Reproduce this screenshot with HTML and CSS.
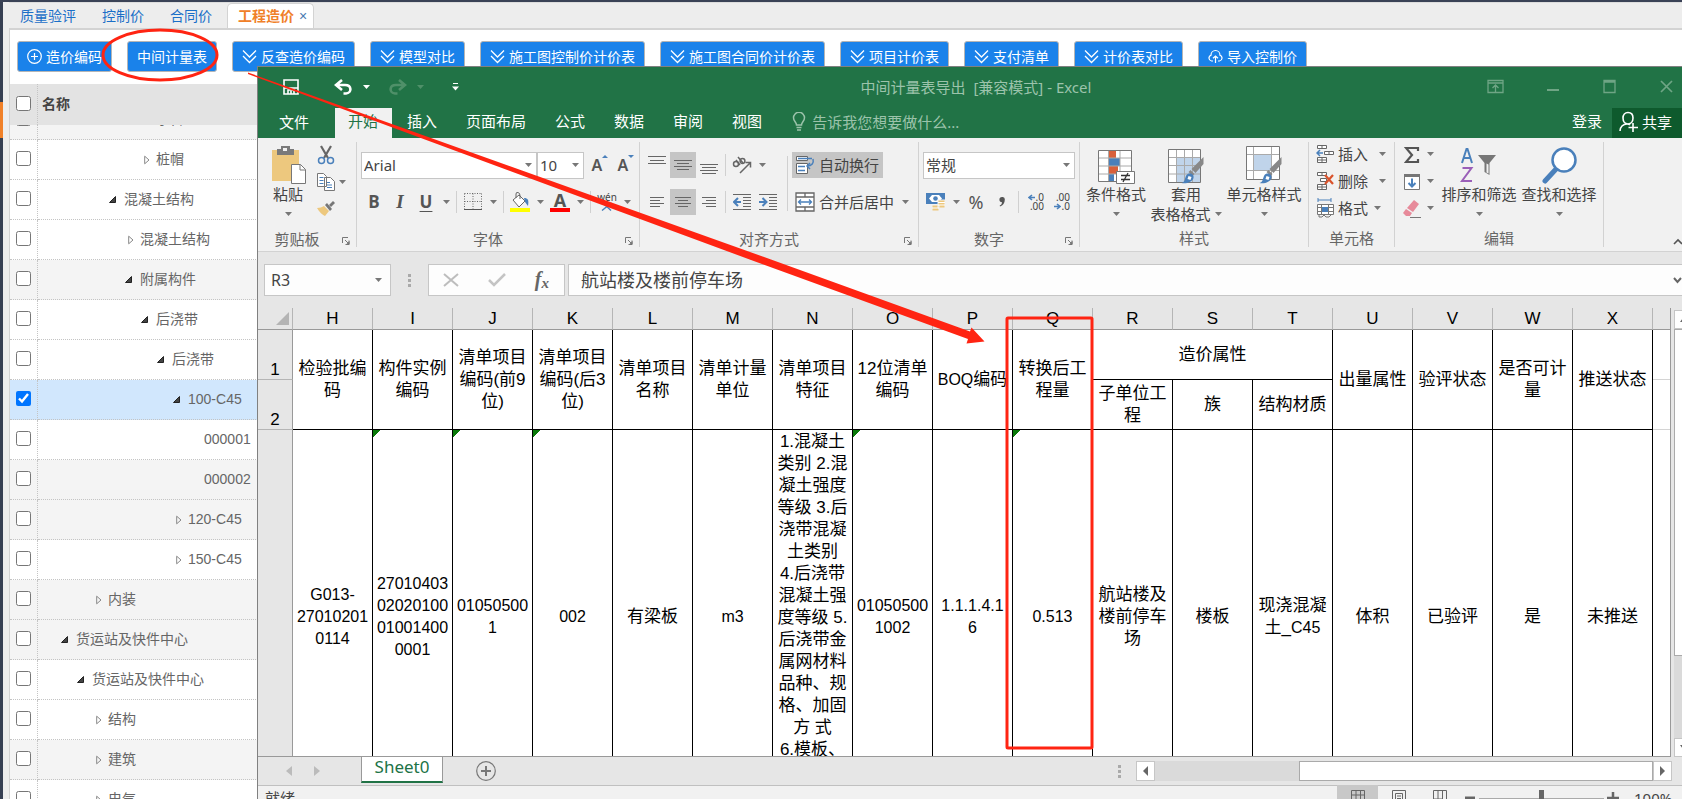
FILE: index.html
```html
<!DOCTYPE html>
<html lang="zh-CN">
<head>
<meta charset="utf-8">
<title>工程造价</title>
<link rel="stylesheet" href="styles.css">
</head>
<body>
<svg class="defs" aria-hidden="true">
  <symbol id="caret" viewBox="0 0 7 4"><path d="M0 0h7L3.500 4z" fill="currentColor"/></symbol>
  <symbol id="chev" viewBox="0 0 15 15"><path d="M1 1.500l6.500 6.500L14 1.500M1 7l6.500 6.500L14 7" fill="none" stroke="currentColor" stroke-width="1.300"/></symbol>
  <symbol id="launch" viewBox="0 0 8 8"><path d="M.5 6V.5H6M3 3l4 4M7 3.500V7.500H3.500" fill="none" stroke="#777"/><path d="M7.500 4v3.500H4z" fill="#777"/></symbol>
  <symbol id="open" viewBox="0 0 6 10"><path d="M.7 1.200L5 5 .7 8.800z" fill="none" stroke="#888"/></symbol>
  <symbol id="down" viewBox="0 0 7 7"><path d="M6.500.5v6h-6z" fill="#444" stroke="#222"/></symbol>
  <symbol id="brush" viewBox="0 0 24 28"><path d="M23 1v7l-8 9-4-4z" fill="#888"/><path d="M10 14l4 4-2 2-4-4z" fill="#888"/><path d="M1 27c4-1 3-5 5-8 3-3 8-1 7 3-1 4-7 6-12 5z" fill="#4a80bb"/><path d="M8 20l3 1-1 3-3-1z" fill="#fff"/></symbol>
</svg>

<div class="app">
  <nav class="rail"><a class="rail-item" href="#" aria-label="当前模块"></a></nav>
  <main class="main">
    <nav class="tabs">
      <a class="tab" href="#">质量验评</a><a class="tab" href="#">控制价</a><a class="tab" href="#">合同价</a>
      <a class="tab tab-on" href="#">工程造价 <span class="tab-x">×</span></a>
    </nav>
    <section class="panel">
      <div class="toolbar">
        <button class="btn"><svg viewBox="0 0 15 15"><circle cx="7.500" cy="7.500" r="6.800" fill="none" stroke="currentColor" stroke-width="1.200"/><path d="M7.500 4v7M4 7.500h7" stroke="currentColor" stroke-width="1.200"/></svg>造价编码</button>
        <button class="btn">中间计量表</button>
        <button class="btn"><svg><use href="#chev"/></svg>反查造价编码</button>
        <button class="btn"><svg><use href="#chev"/></svg>模型对比</button>
        <button class="btn"><svg><use href="#chev"/></svg>施工图控制价计价表</button>
        <button class="btn"><svg><use href="#chev"/></svg>施工图合同价计价表</button>
        <button class="btn"><svg><use href="#chev"/></svg>项目计价表</button>
        <button class="btn"><svg><use href="#chev"/></svg>支付清单</button>
        <button class="btn"><svg><use href="#chev"/></svg>计价表对比</button>
        <button class="btn"><svg viewBox="0 0 15 15"><path d="M5 12H3.500a3 3 0 0 1-.5-5.800C3 3.500 5 1.500 7.500 1.500S12 3.500 12 6.200a3 3 0 0 1-.5 5.800H10M7.500 14V7M5 9.300L7.500 7 10 9.300" fill="none" stroke="currentColor" stroke-width="1.200"/></svg>导入控制价</button>
      </div>
      <div class="tree-head"><span class="tree-check"><input type="checkbox" aria-label="全选"></span><span class="tree-title">名称</span></div>
      <div class="tree-body">
        <table class="tree">
          <tr class="alt"><td class="tree-check"><input type="checkbox" aria-label="承台"></td><td class="l7"><svg class="open"><use href="#open"/></svg>承台</td></tr>
          <tr><td class="tree-check"><input type="checkbox" aria-label="桩帽"></td><td class="l7"><svg class="open"><use href="#open"/></svg>桩帽</td></tr>
          <tr><td class="tree-check"><input type="checkbox" aria-label="混凝土结构"></td><td class="l5"><svg class="down"><use href="#down"/></svg>混凝土结构</td></tr>
          <tr><td class="tree-check"><input type="checkbox" aria-label="混凝土结构"></td><td class="l6"><svg class="open"><use href="#open"/></svg>混凝土结构</td></tr>
          <tr class="alt"><td class="tree-check"><input type="checkbox" aria-label="附属构件"></td><td class="l6"><svg class="down"><use href="#down"/></svg>附属构件</td></tr>
          <tr><td class="tree-check"><input type="checkbox" aria-label="后浇带"></td><td class="l7"><svg class="down"><use href="#down"/></svg>后浇带</td></tr>
          <tr><td class="tree-check"><input type="checkbox" aria-label="后浇带"></td><td class="l8"><svg class="down"><use href="#down"/></svg>后浇带</td></tr>
          <tr class="sel"><td class="tree-check"><input type="checkbox" checked aria-label="100-C45"></td><td class="l9"><svg class="down"><use href="#down"/></svg>100-C45</td></tr>
          <tr><td class="tree-check"><input type="checkbox" aria-label="000001"></td><td class="l11">000001</td></tr>
          <tr class="alt"><td class="tree-check"><input type="checkbox" aria-label="000002"></td><td class="l11">000002</td></tr>
          <tr class="alt"><td class="tree-check"><input type="checkbox" aria-label="120-C45"></td><td class="l9"><svg class="open"><use href="#open"/></svg>120-C45</td></tr>
          <tr><td class="tree-check"><input type="checkbox" aria-label="150-C45"></td><td class="l9"><svg class="open"><use href="#open"/></svg>150-C45</td></tr>
          <tr class="alt"><td class="tree-check"><input type="checkbox" aria-label="内装"></td><td class="l4"><svg class="open"><use href="#open"/></svg>内装</td></tr>
          <tr class="alt"><td class="tree-check"><input type="checkbox" aria-label="货运站及快件中心"></td><td class="l2"><svg class="down"><use href="#down"/></svg>货运站及快件中心</td></tr>
          <tr><td class="tree-check"><input type="checkbox" aria-label="货运站及快件中心"></td><td class="l3"><svg class="down"><use href="#down"/></svg>货运站及快件中心</td></tr>
          <tr><td class="tree-check"><input type="checkbox" aria-label="结构"></td><td class="l4"><svg class="open"><use href="#open"/></svg>结构</td></tr>
          <tr class="alt"><td class="tree-check"><input type="checkbox" aria-label="建筑"></td><td class="l4"><svg class="open"><use href="#open"/></svg>建筑</td></tr>
          <tr><td class="tree-check"><input type="checkbox" aria-label="电气"></td><td class="l4"><svg class="open"><use href="#open"/></svg>电气</td></tr>
        </table>
      </div>
    </section>
  </main>
</div>

<section class="excel">
  <header class="titlebar">
    <div class="qat">
      <button aria-label="保存"><svg width="18" height="18" viewBox="0 0 18 18"><path d="M2 2h14v14H2zM2 10h14M6 16v-4h6v4M9 13v3" fill="none" stroke="#fff" stroke-width="1.600"/></svg></button>
      <button class="q-undo" aria-label="撤消"><svg width="19" height="16" viewBox="0 0 19 16"><path d="M8 1L2 6l6 5M2 6h9c7 0 7 8 1 8.500H9.500" fill="none" stroke="#fff" stroke-width="2.600"/></svg><svg class="caret"><use href="#caret"/></svg></button>
      <button class="q-redo" aria-label="恢复"><svg width="19" height="16" viewBox="0 0 19 16"><path d="M11 1l6 5-6 5M17 6H8c-7 0-7 8-1 8.500h2.500" fill="none" stroke="currentColor" stroke-width="2.600"/></svg><svg class="caret"><use href="#caret"/></svg></button>
      <button class="q-more" aria-label="自定义快速访问工具栏"><svg width="7" height="8" viewBox="0 0 7 8"><path d="M1 .5h5" stroke="#fff"/><path d="M0 3.500h7L3.500 7.500z" fill="#fff"/></svg></button>
    </div>
    <h1 class="title">中间计量表导出&nbsp; [兼容模式] - Excel</h1>
    <div class="winctl">
      <button aria-label="功能区显示选项"><svg viewBox="0 0 17 17"><path d="M1 2.500h15v12H1zM1 5h15M8.500 14V7.500M5.500 10l3-3 3 3" fill="none" stroke="currentColor" stroke-width="1.300"/></svg></button>
      <button aria-label="最小化"><svg viewBox="0 0 17 17"><path d="M3 12h12" stroke="currentColor" stroke-width="2"/></svg></button>
      <button aria-label="最大化"><svg viewBox="0 0 17 17"><path d="M3 2.500h11v12H3zM3 4h11" fill="none" stroke="currentColor" stroke-width="1.300"/></svg></button>
      <button aria-label="关闭"><svg viewBox="0 0 17 17"><path d="M3 3l11 11M14 3L3 14" stroke="currentColor" stroke-width="1.700"/></svg></button>
    </div>
  </header>
  <nav class="rtabs">
    <button class="rtab file">文件</button><button class="rtab on">开始</button><button class="rtab">插入</button><button class="rtab">页面布局</button><button class="rtab">公式</button><button class="rtab">数据</button><button class="rtab">审阅</button><button class="rtab">视图</button>
    <button class="tell"><svg width="14" height="20" viewBox="0 0 14 20"><path d="M4.500 13c0-3-3-3.500-3-7.200a5.500 5.500 0 0 1 11 0c0 3.700-3 4.200-3 7.200zM4.500 15.500h5M5 18h4" fill="none" stroke="currentColor" stroke-width="1.500"/></svg>告诉我您想要做什么...</button>
    <button class="login">登录</button>
    <button class="share"><svg width="20" height="22" viewBox="0 0 20 22"><path d="M1 20c0-4 3-7 7-7 1 0 2 0 3 1M9 1.500c3 0 5 2.200 5 5.500s-2 6-5 6-5-2.700-5-6 2-5.500 5-5.500zM14 12v9M9.500 16.500h9.500" fill="none" stroke="#fff" stroke-width="1.600"/></svg>共享</button>
  </nav>

  <div class="ribbon">
    <div class="group g-clip">
      <div class="gbody">
        <button class="big b-paste"><svg viewBox="0 0 38 38"><path d="M3 4h27v31H3z" fill="#edc87e"/><path d="M8 3h4V0h9v3h4v6H8z" fill="#7a7a7a"/><path d="M14 2h4v3h-4z" fill="#f1f1f1"/><path d="M22.500 18.500h9l5 5v14h-14z" fill="#fff" stroke="#777"/><path d="M31 18.500V24h5.500" fill="none" stroke="#777"/></svg><span>粘贴</span><svg class="caret"><use href="#caret"/></svg></button>
        <div class="stack">
          <button class="tool" aria-label="剪切"><svg width="18" height="20" viewBox="0 0 18 20"><path d="M4 1l7 12M14 1L7 13" stroke="#666" stroke-width="2.200"/><circle cx="4.500" cy="15.500" r="3" fill="none" stroke="#4a80bb" stroke-width="1.500"/><circle cx="13.500" cy="15.500" r="3" fill="none" stroke="#4a80bb" stroke-width="1.500"/></svg></button>
          <div class="row tight"><button class="tool" aria-label="复制"><svg width="18" height="20" viewBox="0 0 18 20"><path d="M.5 1.500h6l3 3v10h-9zM7.500 5.500h6l4 4v9h-10z" fill="#fff" stroke="#777"/><path d="M2.500 5.500h4M2.500 8.500h4M2.500 11.500h4M10 10.500h3M10 13h5M10 15.500h5" stroke="#4a80bb"/></svg></button><button class="drop" aria-label="复制选项"><svg class="caret"><use href="#caret"/></svg></button></div>
          <button class="tool" aria-label="格式刷"><svg width="18" height="16" viewBox="0 0 18 16"><path d="M7 5l5 5-4 5c-2-1-6-4-8-8 3 0 5-1 7-2z" fill="#edc87e"/><path d="M8 4l2-2 5 6-2 2zM12 4l4-4 2 2-4 4z" fill="#777"/></svg></button>
        </div>
      </div>
      <div class="glabel with-launch"><span>剪贴板</span><svg class="launch"><use href="#launch"/></svg></div>
    </div>

    <div class="group g-font">
      <div class="gbody rows">
        <div class="row">
          <label class="combo c-font"><select aria-label="字体"><option>Arial</option></select><svg class="caret"><use href="#caret"/></svg></label><label class="combo c-size"><select aria-label="字号"><option>10</option></select><svg class="caret"><use href="#caret"/></svg></label>
          <button class="tool glyph grow" aria-label="增大字号">A<svg width="6" height="3" viewBox="0 0 6 3"><path d="M0 3l3-3 3 3z" fill="#4a80bb"/></svg></button>
          <button class="tool glyph grow" aria-label="减小字号">A<svg width="6" height="3" viewBox="0 0 6 3"><path d="M0 0h6L3 3z" fill="#4a80bb"/></svg></button>
        </div>
        <div class="row">
          <button class="tool glyph bold">B</button><button class="tool glyph ital">I</button><button class="tool glyph under">U</button><button class="drop" aria-label="下划线选项"><svg class="caret"><use href="#caret"/></svg></button><i class="sep"></i>
          <button class="tool" aria-label="边框"><svg width="18" height="18" viewBox="0 0 18 18"><path d="M.5 .5h17M.5 8.500h17M.5.500v16M9 .5v16M17.500.500v16" stroke="#666" stroke-dasharray="1 1.500"/><path d="M0 16.500h18" stroke="#555"/></svg></button><button class="drop" aria-label="边框选项"><svg class="caret"><use href="#caret"/></svg></button><i class="sep"></i>
          <button class="tool" aria-label="填充颜色"><svg width="20" height="20" viewBox="0 0 20 20"><path d="M3 8l6-5 6 6-6 6z" fill="#fff" stroke="#666"/><path d="M6 6V2q0-2 2-1.500t2 3V7" fill="none" stroke="#666"/><path d="M14 6c4 0 5 2 4 8l-3-4z" fill="#4a80bb"/><path d="M0 16h20v4H0z" fill="#ff0"/></svg></button><button class="drop" aria-label="填充颜色选项"><svg class="caret"><use href="#caret"/></svg></button>
          <button class="tool glyph fcolor">A</button><button class="drop" aria-label="字体颜色选项"><svg class="caret"><use href="#caret"/></svg></button><i class="sep"></i>
          <button class="tool pinyin" aria-label="拼音">wén<svg width="12" height="10" viewBox="0 0 12 10"><path d="M6 0v2M1 2.500h10M3 3l7 6.500M9 3L1 9.500" fill="none" stroke="#4a80bb" stroke-width="1.400"/></svg></button><button class="drop" aria-label="拼音选项"><svg class="caret"><use href="#caret"/></svg></button>
        </div>
      </div>
      <div class="glabel with-launch"><span>字体</span><svg class="launch"><use href="#launch"/></svg></div>
    </div>

    <div class="group g-align">
      <div class="gbody">
        <div class="rows">
          <div class="row">
            <button class="tool" aria-label="顶端对齐"><svg class="al" viewBox="0 0 18 18"><path d="M0 .5h18M2 4.500h14M0 7.500h18" stroke="#666"/></svg></button><button class="tool pressed" aria-label="垂直居中"><svg class="al" viewBox="0 0 18 18"><path d="M0 4.500h18M3 7.500h12M0 10.500h18M3 13.500h12" stroke="#666"/></svg></button><button class="tool" aria-label="底端对齐"><svg class="al" viewBox="0 0 18 18"><path d="M0 8.500h18M2 11.500h14M0 14.500h18M2 17.500h14" stroke="#666"/></svg></button><i class="sep"></i>
            <button class="tool" aria-label="方向"><svg width="20" height="18" viewBox="0 0 20 18"><g fill="none" stroke="#666" stroke-width="1.500"><ellipse cx="4" cy="8" rx="2.500" ry="2.500"/><path d="M4 4l4 5M6 1l5 6"/><circle cx="10.500" cy="5" r="2.400"/><path d="M8 17L18 7M13.500 6.500h5V11.500"/></g></svg></button><button class="drop" aria-label="方向选项"><svg class="caret"><use href="#caret"/></svg></button>
          </div>
          <div class="row">
            <button class="tool" aria-label="左对齐"><svg class="al" viewBox="0 0 18 18"><path d="M2 4.500h14M2 7.500h10M2 10.500h14M2 13.500h10" stroke="#666"/></svg></button><button class="tool pressed" aria-label="居中"><svg class="al" viewBox="0 0 18 18"><path d="M1 4.500h16M4 7.500h10M1 10.500h16M4 13.500h10" stroke="#666"/></svg></button><button class="tool" aria-label="右对齐"><svg class="al" viewBox="0 0 18 18"><path d="M2 4.500h14M6 7.500h10M2 10.500h14M6 13.500h10" stroke="#666"/></svg></button><i class="sep"></i>
            <button class="tool" aria-label="减少缩进量"><svg class="al" viewBox="0 0 18 18"><path d="M0 1.500h18M10 4.500h8M10 7.500h8M10 10.500h8M10 13.500h8M0 16.500h18" stroke="#666"/><path d="M8 9H2M5 5L1 9l4 4" fill="none" stroke="#4a80bb" stroke-width="2"/></svg></button><button class="tool" aria-label="增加缩进量"><svg class="al" viewBox="0 0 18 18"><path d="M0 1.500h18M10 4.500h8M10 7.500h8M10 10.500h8M10 13.500h8M0 16.500h18" stroke="#666"/><path d="M0 9h6M3.500 5l4 4-4 4" fill="none" stroke="#4a80bb" stroke-width="2"/></svg></button>
          </div>
        </div>
        <i class="sep tall"></i>
        <div class="rows">
          <button class="wide pressed"><svg width="20" height="20" viewBox="0 0 20 20"><path d="M1.500 1.500h11v4h-11zM1.500 8.500h11v10h-11z" fill="#fff" stroke="#666"/><path d="M3 3.500h14M3 11.500h7M3 15.500h7M18 4c1 4-1 7-6 7M15 8l-3 3 3 3" fill="none" stroke="#4a80bb" stroke-width="1.500"/></svg>自动换行</button>
          <div class="row tight"><button class="wide"><svg width="20" height="20" viewBox="0 0 20 20"><path d="M1 1h18v18H1zM1 5h18M1 15h18M10 1v4M10 15v4" fill="#fff" stroke="#666" stroke-width="1.300"/><path d="M4 10h12M6 7.500L3.500 10 6 12.500M14 7.500l2.500 2.500-2.500 2.500" fill="none" stroke="#4a80bb" stroke-width="1.300"/></svg>合并后居中</button><button class="drop" aria-label="合并选项"><svg class="caret"><use href="#caret"/></svg></button></div>
        </div>
      </div>
      <div class="glabel with-launch"><span>对齐方式</span><svg class="launch"><use href="#launch"/></svg></div>
    </div>

    <div class="group g-num">
      <div class="gbody rows">
        <div class="row"><label class="combo c-num"><select aria-label="数字格式"><option>常规</option></select><svg class="caret"><use href="#caret"/></svg></label></div>
        <div class="row">
          <button class="tool" aria-label="会计数字格式"><svg width="20" height="20" viewBox="0 0 20 20"><path d="M0 1h19v11H0z" fill="#4a80bb"/><path d="M3 6.500L6 3h7l3 3.500L13 10H6z" fill="#fff"/><circle cx="9.500" cy="6.500" r="2.300" fill="#4a80bb"/><path d="M12 8h7v8h-7zM6 13h7v6H6z" fill="#edc87e" stroke="#f1f1f1"/><path d="M12 10.500h7M12 13h7M6 16h7" stroke="#fff"/></svg></button><button class="drop" aria-label="会计格式选项"><svg class="caret"><use href="#caret"/></svg></button>
          <button class="tool glyph pct">%</button><button class="tool" aria-label="千位分隔样式"><svg width="6" height="10" viewBox="0 0 6 10"><path d="M3 0a2.600 2.600 0 0 1 2.800 2.800C5.800 6 4 8.500 1 9.500L.7 8.500C2.300 7.700 3 6.700 3 5.200A2.600 2.600 0 0 1 3 0z" fill="#555"/></svg></button><i class="sep"></i>
          <button class="tool dec" aria-label="增加小数位数"><span><svg width="7" height="7" viewBox="0 0 7 7"><path d="M7 3.500H2M4 1L1 3.500 4 6" fill="none" stroke="#4a80bb" stroke-width="1.600"/></svg>.0</span><span>.00</span></button><button class="tool dec" aria-label="减少小数位数"><span>.00</span><span><svg width="7" height="7" viewBox="0 0 7 7"><path d="M0 3.500h5M3 1l3 2.500L3 6" fill="none" stroke="#4a80bb" stroke-width="1.600"/></svg>.0</span></button>
        </div>
      </div>
      <div class="glabel with-launch"><span>数字</span><svg class="launch"><use href="#launch"/></svg></div>
    </div>

    <div class="group g-style">
      <div class="gbody">
        <button class="big b-cond"><svg viewBox="0 0 38 38"><path d="M1.500 4.500h33v31h-33z" fill="#fff"/><path d="M12 5h7v7h-7zM12 20h9v8h-9z" fill="#d9603b"/><path d="M12 12h11v8H12zM12 28h5v7h-5z" fill="#4a80bb"/><path d="M1.500 12h33M1.500 20h33M1.500 28h33M11.500 4v31M23 4v31" stroke="#aaa"/><path d="M1.500 4.500h33v31h-33z" fill="none" stroke="#777"/><path d="M19.500 25.500h18v12h-18z" fill="#fff" stroke="#777"/><path d="M24 29.500h9M24 33.500h9M31 27l-5 9" stroke="#333" stroke-width="1.300"/></svg><span>条件格式</span><svg class="caret"><use href="#caret"/></svg></button>
        <button class="big b-tbl"><svg viewBox="0 0 38 38"><path d="M1.500 3.500h32v33h-32z" fill="#fff"/><path d="M9 12h24v24H9z" fill="#c0d4ea"/><path d="M1.500 11.500h32M1.500 19.500h32M1.500 28h32M9.500 3v33M17.500 3v33M25.500 3v33" stroke="#aaa"/><path d="M1.500 3.500h32v33h-32z" fill="none" stroke="#777"/><use href="#brush" x="13" y="10" width="25" height="28"/></svg><span>套用</span><span>表格格式<svg class="caret"><use href="#caret"/></svg></span></button>
        <button class="big b-cell"><svg viewBox="0 0 38 38"><path d="M1.500.500h33v33h-33z" fill="#fff"/><path d="M9 9h17v15H9z" fill="#c0d4ea"/><path d="M1.500 8.500h33M1.500 24.500h33M8.500 0v33M26.500 0v33" stroke="#aaa"/><path d="M1.500.500h33v33h-33z" fill="none" stroke="#777"/><use href="#brush" x="13" y="10" width="25" height="28"/></svg><span>单元格样式</span><svg class="caret"><use href="#caret"/></svg></button>
      </div>
      <div class="glabel"><span>样式</span></div>
    </div>

    <div class="group g-cells">
      <div class="gbody"><div class="stack">
        <button class="wide"><svg width="18" height="20" viewBox="0 0 18 20"><path d="M1.500 1.500h9v3h-9zM6 1.500v3M1.500 13.500h9v5h-9zM6 13.500v5M1.500 16h9M8.500 7.500h9v3h-9zM13 7.500v3" fill="#fff" stroke="#666"/><path d="M7 9H1M4 6L1 9l3 3" fill="none" stroke="#4a80bb" stroke-width="1.500"/></svg>插入<svg class="caret far"><use href="#caret"/></svg></button>
        <button class="wide"><svg width="18" height="20" viewBox="0 0 18 20"><path d="M1.500 1.500h9v3h-9zM6 1.500v3M1.500 13.500h9v5h-9zM6 13.500v5M1.500 16h9M4.500 7.500h6v3h-6z" fill="#fff" stroke="#666"/><path d="M9 4l8 9M17 4l-8 9" stroke="#d9532c" stroke-width="2.200"/></svg>删除<svg class="caret far"><use href="#caret"/></svg></button>
        <button class="wide"><svg width="18" height="20" viewBox="0 0 18 20"><path d="M2 2h13M2 0v4M15 0v4" stroke="#4a80bb"/><path d="M1.500 6.500h16v10h-16zM1.500 9.500h16M1.500 13.500h16M5.500 6v11M12.500 6v11" fill="#fff" stroke="#777"/><path d="M6 9h6v5H6z" fill="#4a80bb"/><path d="M3 17v2h3l2-2 2 2h3l2-2" fill="none" stroke="#777"/></svg>格式<svg class="caret"><use href="#caret"/></svg></button>
      </div></div>
      <div class="glabel"><span>单元格</span></div>
    </div>

    <div class="group g-edit">
      <div class="gbody">
        <div class="stack">
          <div class="row tight"><button class="tool" aria-label="自动求和"><svg width="16" height="18" viewBox="0 0 16 18"><path d="M14 5V2H2l6 7-6 7h12v-3" fill="none" stroke="#555" stroke-width="2.200"/></svg></button><button class="drop" aria-label="求和选项"><svg class="caret"><use href="#caret"/></svg></button></div>
          <div class="row tight"><button class="tool" aria-label="填充"><svg width="18" height="18" viewBox="0 0 18 18"><path d="M1.500 1.500h15v15h-15z" fill="#fff" stroke="#777"/><path d="M1 1h16v3H1z" fill="#777"/><path d="M9 5.500v8M5.500 10L9 13.500l3.500-3.500" fill="none" stroke="#4a80bb" stroke-width="2"/></svg></button><button class="drop" aria-label="填充选项"><svg class="caret"><use href="#caret"/></svg></button></div>
          <div class="row tight"><button class="tool" aria-label="清除"><svg width="18" height="18" viewBox="0 0 18 18"><path d="M11 0l5 4-6 8-6-4z" fill="#e78a9a"/><path d="M3 9l6 4-2 3H3l-3-3z" fill="#e78a9a"/><path d="M7 17.500h11" stroke="#777"/></svg></button><button class="drop" aria-label="清除选项"><svg class="caret"><use href="#caret"/></svg></button></div>
        </div>
        <button class="big b-cell"><svg viewBox="0 0 38 38"><path d="M2 17L6.500 3h1L12 17M3.500 12h7" fill="none" stroke="#4a80bb" stroke-width="2"/><path d="M2.500 22h9L2 35h10" fill="none" stroke="#9a5fb8" stroke-width="2"/><path d="M18 9h18l-6.500 8v12l-5-3V17z" fill="#777"/><path d="M26.500 17.500v9l2 1v-9z" fill="#f1f1f1"/></svg><span>排序和筛选</span><svg class="caret"><use href="#caret"/></svg></button>
        <button class="big b-cell"><svg viewBox="0 0 38 38"><path d="M17 22L5 35" stroke="#4a80bb" stroke-width="5" stroke-linecap="round"/><circle cx="24" cy="14" r="11.500" fill="#fff" stroke="#4a80bb" stroke-width="2.500"/></svg><span>查找和选择</span><svg class="caret"><use href="#caret"/></svg></button>
      </div>
      <div class="glabel"><span>编辑</span></div>
    </div>
    <button class="collapse" aria-label="折叠功能区"><svg width="10" height="7" viewBox="0 0 10 7"><path d="M1 6l4-4 4 4" fill="none" stroke="#555" stroke-width="1.600"/></svg></button>
  </div>

  <div class="fbar">
    <label class="namebox"><input type="text" value="R3" aria-label="名称框"><svg class="caret"><use href="#caret"/></svg></label>
    <svg class="dots" viewBox="0 0 3 13"><path d="M0 0h3v3H0zM0 5h3v3H0zM0 10h3v3H0z" fill="#aaa"/></svg>
    <div class="fxbox">
      <button aria-label="取消"><svg width="16" height="14" viewBox="0 0 16 14"><path d="M1 1l14 12M15 1L1 13" stroke="#bdbdbd" stroke-width="2"/></svg></button>
      <button aria-label="输入"><svg width="18" height="14" viewBox="0 0 18 14"><path d="M1 7l5 5L17 1" fill="none" stroke="#c4c4c4" stroke-width="2.500"/></svg></button>
      <button class="fx" aria-label="插入函数">f<sub>x</sub></button>
    </div>
    <label class="formula"><input type="text" value="航站楼及楼前停车场" aria-label="编辑栏"><svg width="9" height="7" viewBox="0 0 9 7"><path d="M1 1l3.500 4L8 1" fill="none" stroke="#666" stroke-width="2"/></svg></label>
  </div>

  <div class="sheet-area">
    <div class="sheet-clip">
      <table class="sheet">
        <colgroup><col class="rh"><col span="17" class="dc"><col></colgroup>
        <thead>
          <tr><th class="corner"><svg width="13" height="13" viewBox="0 0 13 13"><path d="M13 0v13H0z" fill="#b4b4b4"/></svg></th><th>H</th><th>I</th><th>J</th><th>K</th><th>L</th><th>M</th><th>N</th><th>O</th><th>P</th><th>Q</th><th>R</th><th>S</th><th>T</th><th>U</th><th>V</th><th>W</th><th>X</th><th class="rest"></th></tr>
        </thead>
        <tbody>
          <tr class="r-head"><th>1</th><td rowspan="2">检验批编<br>码</td><td rowspan="2">构件实例<br>编码</td><td rowspan="2">清单项目<br>编码(前9<br>位)</td><td rowspan="2">清单项目<br>编码(后3<br>位)</td><td rowspan="2">清单项目<br>名称</td><td rowspan="2">清单计量<br>单位</td><td rowspan="2">清单项目<br>特征</td><td rowspan="2">12位清单<br>编码</td><td rowspan="2"><span class="latin">BOQ</span>编码</td><td rowspan="2">转换后工<br>程量</td><td colspan="3">造价属性</td><td rowspan="2">出量属性</td><td rowspan="2">验评状态</td><td rowspan="2">是否可计<br>量</td><td rowspan="2">推送状态</td><td class="rest"></td></tr>
          <tr class="r-head"><th>2</th><td>子单位工<br>程</td><td>族</td><td>结构材质</td><td class="rest"></td></tr>
          <tr class="r-data"><th>3</th><td class="latin">G013-<br>27010201<br>0114</td><td class="latin flag">27010403<br>02020100<br>01001400<br>0001</td><td class="latin flag">01050500<br>1</td><td class="latin flag">002</td><td>有梁板</td><td class="latin">m3</td><td class="top">1.混凝土<br>类别 2.混<br>凝土强度<br>等级 3.后<br>浇带混凝<br>土类别<br>4.后浇带<br>混凝土强<br>度等级 5.<br>后浇带金<br>属网材料<br>品种、规<br>格、加固<br>方 式<br>6.模板、</td><td class="latin flag">01050500<br>1002</td><td class="latin">1.1.1.4.1<br>6</td><td class="latin flag">0.513</td><td>航站楼及<br>楼前停车<br>场</td><td>楼板</td><td>现浇混凝<br>土_<span class="latin">C45</span></td><td>体积</td><td>已验评</td><td>是</td><td>未推送</td><td class="rest"></td></tr>
        </tbody>
      </table>
    </div>
    <div class="vscroll">
      <button class="sb" aria-label="向上滚动"><svg width="7" height="5" viewBox="0 0 7 5"><path d="M0 5l3.500-5L7 5z" fill="#666"/></svg></button>
      <div class="vtrack"><div class="vthumb"></div></div>
      <button class="sb" aria-label="向下滚动"><svg width="7" height="5" viewBox="0 0 7 5"><path d="M0 0h7L3.500 5z" fill="#666"/></svg></button>
    </div>
  </div>

  <div class="sheetbar">
    <div class="sheetnav">
      <button aria-label="上一个工作表"><svg width="6" height="10" viewBox="0 0 6 10"><path d="M6 0v10L0 5z" fill="#bbb"/></svg></button>
      <button aria-label="下一个工作表"><svg width="6" height="10" viewBox="0 0 6 10"><path d="M0 0v10l6-5z" fill="#bbb"/></svg></button>
    </div>
    <button class="sheettab">Sheet0</button>
    <button class="addsheet" aria-label="新工作表"><svg width="20" height="20" viewBox="0 0 20 20"><circle cx="10" cy="10" r="9.300" fill="none" stroke="#777" stroke-width="1.200"/><path d="M10 5v10M5 10h10" stroke="#777" stroke-width="2"/></svg></button>
    <svg class="dots" viewBox="0 0 3 13"><path d="M0 0h3v3H0zM0 5h3v3H0zM0 10h3v3H0z" fill="#aaa"/></svg>
    <div class="hscroll">
      <button class="sb" aria-label="向左滚动"><svg width="5" height="10" viewBox="0 0 5 10"><path d="M5 0v10L0 5z" fill="#666"/></svg></button>
      <div class="htrack"><div class="hthumb"></div></div>
      <button class="sb" aria-label="向右滚动"><svg width="5" height="10" viewBox="0 0 5 10"><path d="M0 0v10l5-5z" fill="#666"/></svg></button>
    </div>
  </div>

  <footer class="status">
    <span class="ready">就绪</span>
    <button class="view on" aria-label="普通"><svg width="14" height="16" viewBox="0 0 14 16"><path d="M.5.500h13v14H.5zM.5 5h13M.5 10h13M5 .5v14M9.500.500v14" fill="none" stroke="#666"/></svg></button>
    <button class="view" aria-label="页面布局"><svg width="14" height="16" viewBox="0 0 14 16"><path d="M.5.500h13v14H.5zM3.500 3.500h7v11M3.500 3.500v11M5 6h4M5 8.500h4" fill="none" stroke="#666"/></svg></button>
    <button class="view" aria-label="分页预览"><svg width="14" height="16" viewBox="0 0 14 16"><path d="M.5.500h13v14H.5zM5 .5V9M9.500.500V9M0 9h9" fill="none" stroke="#666"/></svg></button>
    <button class="zoom-btn" aria-label="缩小"><svg width="12" height="12" viewBox="0 0 12 12"><path d="M1 6h10" stroke="#666" stroke-width="3"/></svg></button>
    <input class="zoom" type="range" min="0" max="100" value="50" aria-label="缩放">
    <button class="zoom-btn" aria-label="放大"><svg width="12" height="14" viewBox="0 0 12 14"><path d="M0 7h12M6 1v12" stroke="#666" stroke-width="2.500"/></svg></button>
    <span class="pct100">100%</span>
  </footer>
</section>

<svg class="marks" width="1682" height="799" viewBox="0 0 1682 799" aria-hidden="true">
  <ellipse cx="160" cy="55" rx="57" ry="25" fill="none" stroke="#ff2412" stroke-width="3"/>
  <path d="M248 72.500L771 259.500 970 331.500 971.500 327.500 984.500 341.500 966.500 343.500 968 339 751 260 248 74z" fill="#ff2412"/>
  <rect x="1007" y="318" width="85" height="430" rx="1" fill="none" stroke="#ff2412" stroke-width="3"/>
</svg>
</body>
</html>
```

FILE: styles.css
```css
* { box-sizing: border-box; }
html, body { height: 100%; }
body {
  margin: 0;
  position: relative;
  overflow: hidden;
  font: 14px/20px "Liberation Sans", "Noto Sans CJK SC", sans-serif;
  color: #666;
  background: #ededed;
}
button {
  margin: 0; padding: 0; border: 0; background: none;
  font: inherit; color: inherit; white-space: nowrap;
}
a { color: inherit; text-decoration: none; }
svg { display: block; flex: none; }
.defs { position: absolute; width: 0; height: 0; }
.marks { position: absolute; left: 0; top: 0; pointer-events: none; }

/* host page */
.app { display: flex; height: 100%; border-top: 2px solid #3a4256; }
.rail { width: 3px; background: #363f52; padding-top: 100px; }
.rail-item { display: block; height: 36px; background: #f08028; }
.main { flex: 1; min-width: 0; display: flex; flex-direction: column; padding-left: 6px; }
.tabs { display: flex; height: 26px; border-top: 1px solid #ddd; }
.tab { padding: 0 13px; line-height: 26px; color: #1a6fc8; }
.tab:first-child { padding-left: 11px; }
.tab-on {
  display: flex; gap: 5px; margin-left: 2px; padding: 0 6px 0 10px;
  border: 1px solid #d3d3d3; border-bottom: 0; border-radius: 5px 5px 0 0;
  background: #fff; color: #f08028; font-weight: bold; line-height: 24px;
}
.tab-x { color: #4a78b0; font-weight: normal; }
.panel {
  flex: 1; min-height: 0; display: flex; flex-direction: column;
  background: #fff; border-top: 2px solid #d3d3d3; border-left: 1px solid #d3d3d3;
}
.toolbar { display: flex; gap: 15px; padding: 11px 7px; height: 54px; }
.btn {
  display: flex; align-items: center; gap: 4px; height: 31px; padding: 0 9px;
  border: 1px solid #b5b5b5; border-radius: 3px; background: #1a82ea; color: #fff;
}
.btn svg { width: 15px; height: 15px; }
.tree-head { display: flex; align-items: center; height: 41px; background: #e3e3e3; }
.tree-head .tree-check { height: 41px; display: flex; align-items: center; }
.tree-title { padding: 0 0 2px 4px; font-weight: bold; color: #444; }
.tree-check { width: 28px; padding: 0 0 2px 6px; border-right: 1px dotted #c4c4c4; }
.tree-check input { display: block; width: 15px; height: 15px; margin: 0; }
.tree-body { flex: 1; min-height: 0; overflow: hidden; }
.tree { width: 100%; margin-top: -25px; border-spacing: 0; table-layout: fixed; }
.tree td { height: 40px; border-bottom: 1px dotted #c4c4c4; }
.tree td.tree-check { width: 28px; }
.tree td:not(.tree-check) { padding-top: 0; padding-bottom: 2px; }
.tree .alt { background: #f4f4f4; }
.tree .sel { background: #d1e7fd; }
.tree td svg { display: inline-block; margin-right: 8px; }
.tree svg.open { width: 6px; height: 10px; margin: 0 6px 0 4px; vertical-align: -1px; }
.tree svg.down { width: 7px; height: 7px; margin-left: 1px; vertical-align: 1px; }
.l2 { padding-left: 22px; } .l3 { padding-left: 38px; } .l4 { padding-left: 54px; }
.l5 { padding-left: 70px; } .l6 { padding-left: 86px; } .l7 { padding-left: 102px; }
.l8 { padding-left: 118px; } .l9 { padding-left: 134px; } .l11 { padding-left: 166px; }

/* spreadsheet window floating over the page */
.excel {
  position: absolute; left: 257px; right: 0; top: 66px; bottom: -13px;
  display: flex; flex-direction: column; overflow: hidden;
  border: 1px solid #808080; border-width: 1px 0 0 1px; background: #e6e6e6;
  font: 15px/20px "Noto Sans", "Noto Sans CJK SC", sans-serif; color: #444;
}
.caret { width: 7px; height: 4px; color: #777; }
.titlebar { display: grid; grid-template-columns: 1fr auto 1fr; align-items: center; height: 41px; padding-bottom: 2px; background: #217346; color: #9cc3ab; }
.qat { display: flex; align-items: center; padding-left: 24px; gap: 34px; }
.qat button { display: flex; align-items: center; gap: 10px; }
.q-undo .caret { color: #fff; }
.q-redo { color: #4f9069; margin-left: -16px; }
.q-redo .caret { color: #4f9069; }
.qat .q-more { margin-left: -6px; }
.title { margin: 0; padding-left: 12px; font-size: 15px; font-weight: normal; }
.winctl { display: flex; justify-content: flex-end; gap: 40px; padding-right: 7px; color: #6fa585; }
.winctl svg { width: 17px; height: 17px; }
.rtabs { display: flex; height: 30px; background: #217346; color: #fff; }
.rtab { padding: 0 15px 4px 14px; }
.rtab.file { padding: 0 26px 3px 21px; }
.rtab.on { background: #f1f1f1; color: #217346; padding: 0 14px 4px 13px; margin-right: 1px; }
.tell { display: flex; align-items: center; gap: 6px; margin: 0 auto 0 15px; padding-bottom: 3px; color: #9cc3ab; }
.login { padding: 0 10px 4px; }
.share { display: flex; align-items: center; gap: 3px; padding: 0 10px 3px 7px; background: #0e5a2d; }

.ribbon { display: flex; height: 114px; padding-top: 4px; background: #f1f1f1; border-bottom: 1px solid #d2d2d2; }
.group { display: flex; flex-direction: column; height: 105px; border-right: 1px solid #d2d2d2; padding: 0 4px; }
.g-clip { width: 99px; } .g-font { width: 283px; } .g-align { width: 279px; } .g-num { width: 161px; }
.g-style { width: 229px; } .g-cells { width: 86px; } .g-edit { width: 209px; }
.gbody { display: flex; height: 87px; }
.glabel { display: flex; align-items: center; justify-content: center; height: 18px; color: #666; }
.glabel.with-launch { display: grid; grid-template-columns: 1fr 20px; justify-items: center; }
.glabel .launch { width: 8px; height: 8px; justify-self: end; margin: 4px 2px 0 0; }
.rows { display: flex; flex-direction: column; align-items: flex-start; gap: 11px; }
.gbody.rows, .gbody > .rows { padding-top: 10px; }
.row { display: flex; align-items: center; height: 26px; }
.stack { display: flex; flex-direction: column; gap: 1px; }
.tool { display: flex; align-items: center; justify-content: center; width: 26px; height: 26px; }
.drop { display: flex; align-items: center; justify-content: center; width: 14px; height: 26px; }
.g-clip .drop { margin-left: -4px; }
.sep { width: 1px; height: 22px; margin: 0 3px; background: #d0d0d0; }
.sep.tall { height: 55px; margin: 14px 4px 0 6px; }
.pressed { background: #c5c5c5; }
.wide { display: flex; align-items: center; gap: 4px; height: 26px; padding: 0 4px 0 3px; }
.g-cells .caret { margin-left: 2px; }
.g-cells .caret.far { margin-left: 7px; }
.g-cells .wide, .g-edit .stack .drop { padding-bottom: 2px; }
.g-edit .stack .drop { margin-left: -2px; margin-right: 2px; }
.big { display: flex; flex-direction: column; align-items: center; padding-top: 4px; }
.big > svg:first-child { width: 38px; height: 38px; }
.big span { display: flex; align-items: center; gap: 4px; height: 20px; }
.big > .caret { margin-top: 8px; }
.b-paste { width: 50px; margin-left: 1px; }
.b-cond { width: 64px; } .b-tbl { width: 76px; } .b-cell { width: 80px; }
.al { width: 18px; height: 18px; }
.combo { display: grid; height: 27px; border: 1px solid #c6c6c6; background: #fff; align-items: center; }
.combo select {
  grid-area: 1 / 1; width: 100%; height: 100%; padding: 0 2px; margin: 0;
  appearance: none; border: 0; background: none; font: inherit; color: #444;
}
.combo .caret { grid-area: 1 / 1; justify-self: end; margin-right: 4px; pointer-events: none; }
.c-font { width: 176px; } .c-size { width: 47px; margin-right: 3px; } .c-num { width: 152px; }
.glyph { font-size: 17px; font-weight: bold; color: #555; }
.grow { align-items: flex-start; font-size: 16px; font-weight: 600; padding-top: 3px; }
.bold, .under { font-family: "Open Sans", sans-serif; }
.ital { font-family: "Liberation Serif", serif; font-size: 19px; font-style: italic; }
.under { text-decoration: underline; text-underline-offset: 3px; }
.fcolor { height: 20px; border-bottom: 4px solid #f00; width: 20px; margin: 0 3px; font-size: 18px; }
.pinyin { flex-direction: column; font: 10px/8px "Noto Sans", sans-serif; }
.pct { font-weight: normal; font-size: 18px; }
.dec { flex-direction: column; align-items: flex-end; padding-right: 4px; font: 10px/9px "Noto Sans", sans-serif; }
.dec span { display: flex; align-items: center; gap: 1px; }
.collapse { align-self: flex-end; margin: 0 -1px 6px auto; }

.fbar { display: flex; height: 44px; padding-top: 12px; }
.namebox, .fxbox, .formula { display: flex; align-items: center; height: 32px; border: 1px solid #c6c6c6; background: #fdfdfd; }
.fbar input { flex: 1; min-width: 0; border: 0; padding: 0; background: none; color: #444; }
.namebox { width: 127px; margin-left: 6px; padding: 0 8px 0 6px; }
.namebox input { font: 16px "Noto Sans", sans-serif; }
.dots { width: 3px; height: 13px; align-self: center; }
.namebox + .dots { margin: 0 17px; }
.fxbox { width: 137px; justify-content: space-between; padding: 0 15px 0 14px; }
.fx { font: italic bold 20px "Liberation Serif", serif; color: #666; }
.fx sub { font-size: 15px; vertical-align: -2px; }
.formula { flex: 1; margin-left: 3px; padding-left: 12px; border-right: 0; }
.formula input { font: 18px "Noto Sans CJK SC", sans-serif; padding-bottom: 2px; }

.sheet-area { flex: 1; min-height: 0; display: flex; padding-top: 12px; }
.sheet-clip { flex: 1; min-width: 0; overflow: hidden; border-right: 1px solid #999; border-bottom: 1px solid #999; }
.sheet { width: 100%; border-spacing: 0; table-layout: fixed; font: 17px/22px "Liberation Sans", "Noto Sans CJK SC", sans-serif; color: #000; }
.sheet .rh { width: 35px; } .sheet .dc { width: 80px; }
.sheet td, .sheet th { padding: 0; font-weight: normal; text-align: center; white-space: nowrap; }
.sheet thead th { height: 22px; line-height: 21px; background: #e6e6e6; border-right: 1px solid #b5b5b5; border-bottom: 1px solid #999; }
.sheet thead th.rest { border-right: 0; }
.sheet .corner svg { margin: 0 3px 0 auto; }
.sheet tbody th { vertical-align: bottom; line-height: 18px; background: #e6e6e6; border-right: 1px solid #999; border-bottom: 1px solid #b5b5b5; }
.sheet td { padding-top: 1px; background: #fff; border-right: 1px solid #000; border-bottom: 1px solid #000; }
.sheet td.rest { border-right: 0; border-bottom-color: #d4d4d4; }
.sheet .latin { font-size: 16px; }
.r-head { height: 50px; }
.r-data { height: 374px; }
.sheet td.top { vertical-align: top; }
.sheet td.flag { background: linear-gradient(135deg, #0a7a0a 5px, #fff 5px); }
.vscroll { width: 11px; padding: 2px 0 0 3px; display: flex; flex-direction: column; overflow: hidden; }
.sb { display: flex; align-items: center; justify-content: center; flex: none; width: 19px; height: 19px; border: 1px solid #c6c6c6; background: #fff; }
.vtrack { flex: 1; width: 19px; background: #dadada; }
.vthumb { height: 80%; border: 1px solid #aaa; background: #fff; }

.sheetbar { display: flex; height: 29px; border-bottom: 1px solid #c0c0c0; }
.sheetnav { display: flex; gap: 22px; width: 103px; padding-left: 28px; }
.sheettab { width: 82px; height: 26px; padding-bottom: 4px; border: 1px solid #999; border-width: 0 1px 2px; border-bottom-color: #217346; background: #fff; color: #217346; font-size: 17px; line-height: 20px; }
.addsheet { margin: 0 auto 0 33px; }
.sheetbar .dots { margin-right: 15px; }
.hscroll { display: flex; width: 536px; padding: 4px 0; margin-right: 10px; }
.hscroll .sb { height: 20px; }
.htrack { flex: 1; display: flex; justify-content: flex-end; height: 20px; background: #dadada; }
.hthumb { width: 71%; border: 1px solid #aaa; background: #fff; }
.status { display: flex; align-items: center; height: 26px; flex: none; padding-bottom: 2px; background: #f1f1f1; }
.ready { margin: 0 auto 0 7px; }
.view { display: flex; justify-content: center; align-items: center; width: 41px; height: 26px; }
.view.on { background: #c8c8c8; }
.zoom-btn { width: 12px; }
.view + .zoom-btn { margin-left: 4px; }
.zoom { width: 125px; height: 16px; margin: 0 3px; appearance: none; background: linear-gradient(#aaa, #aaa) center / 100% 1px no-repeat; }
.zoom::-webkit-slider-thumb { appearance: none; width: 5px; height: 16px; background: #666; }
.pct100 { width: 63px; padding-left: 15px; }
```
